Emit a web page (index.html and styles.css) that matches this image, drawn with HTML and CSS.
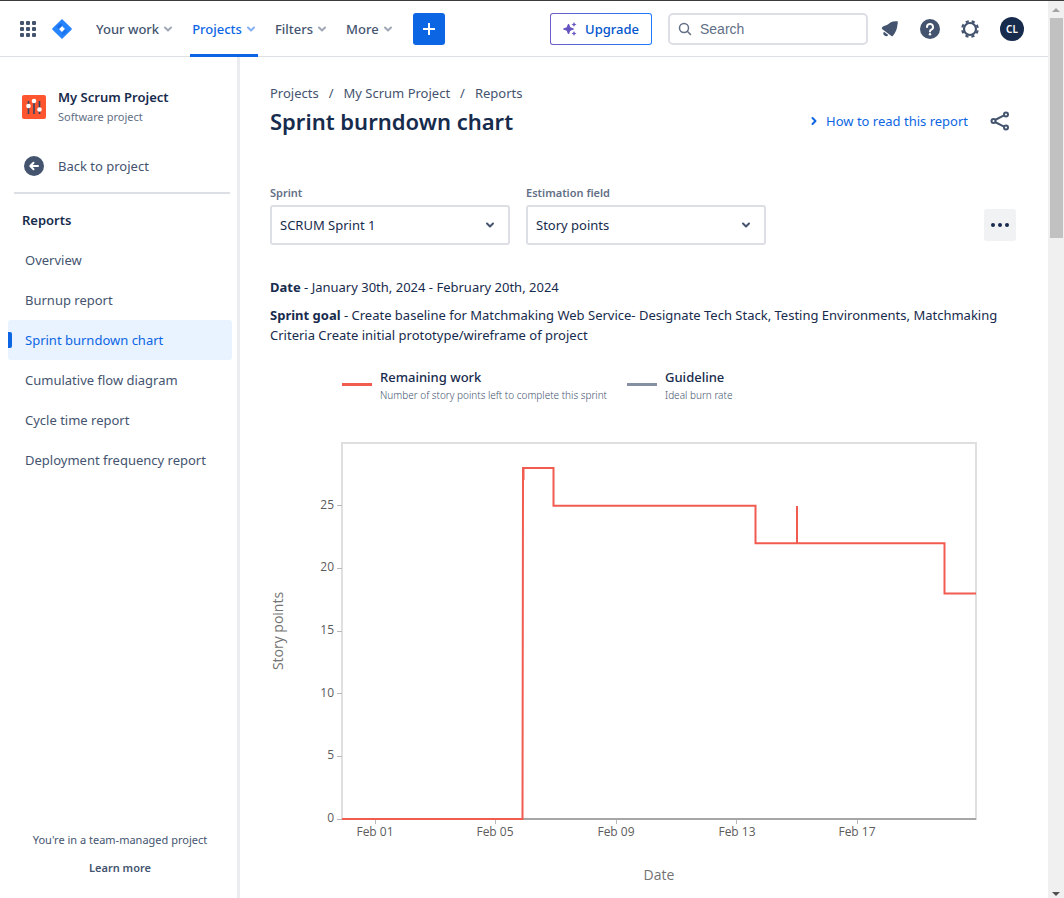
FILE: index.html
```html
<!DOCTYPE html>
<html lang="en">
<head>
<meta charset="utf-8">
<title>Sprint burndown chart</title>
<link rel="stylesheet" href="styles.css">
</head>
<body>
<svg class="defs" width="0" height="0" aria-hidden="true">
  <symbol id="chevron" viewBox="0 0 10 10"><path d="M2 3.5 5 6.5 8 3.5" fill="none" stroke="currentColor" stroke-width="2" stroke-linecap="round" stroke-linejoin="round"/></symbol>
</svg>
<div class="window">
  <div class="app">
    <header class="topbar">
      <button class="icon-btn" aria-label="Switch apps">
        <svg width="16" height="16" viewBox="0 0 16 16" fill="#44546f"><rect width="4" height="4" rx="1"/><rect x="6" width="4" height="4" rx="1"/><rect x="12" width="4" height="4" rx="1"/><rect y="6" width="4" height="4" rx="1"/><rect x="6" y="6" width="4" height="4" rx="1"/><rect x="12" y="6" width="4" height="4" rx="1"/><rect y="12" width="4" height="4" rx="1"/><rect x="6" y="12" width="4" height="4" rx="1"/><rect x="12" y="12" width="4" height="4" rx="1"/></svg>
      </button>
      <a class="logo" href="#" aria-label="Home">
        <svg width="20" height="20" viewBox="0 0 20 20"><path fill="#2684ff" fill-rule="evenodd" d="M10 0 19.5 9.3q.7.7 0 1.4L10 20 .5 10.7q-.7-.7 0-1.4zM10 7 7 10l3 3 3-3z"/><path fill="#0f5fd8" d="M10 0v7L7 10 4.500 7.500Q7 5 10 4z" opacity=".6"/><path fill="#0f5fd8" d="M10 20v-7l3-3 2.500 2.500Q13 15 10 16z" opacity=".45"/></svg>
      </a>
      <nav class="menu">
        <button class="menu-item">Your work <svg class="chev"><use href="#chevron"/></svg></button>
        <button class="menu-item active">Projects <svg class="chev"><use href="#chevron"/></svg></button>
        <button class="menu-item">Filters <svg class="chev"><use href="#chevron"/></svg></button>
        <button class="menu-item">More <svg class="chev"><use href="#chevron"/></svg></button>
      </nav>
      <button class="create" aria-label="Create">
        <svg width="12" height="12" viewBox="0 0 12 12"><path d="M6 0v12M0 6h12" stroke="#fff" stroke-width="2"/></svg>
      </button>
      <div class="tools">
        <button class="upgrade">
          <svg width="14" height="14" viewBox="0 0 14 14" fill="#6554c0"><path d="M5.500 2 6.900 5.600 10.500 7 6.900 8.400 5.500 12 4.100 8.400.5 7 4.100 5.600z" stroke="#6554c0" stroke-linejoin="round"/><path d="M11 0l.8 1.700 1.700.8-1.700.8L11 5l-.8-1.700-1.700-.8 1.700-.8zM11 9l.8 1.700 1.700.8-1.700.8L11 14l-.8-1.700-1.700-.8 1.700-.8z"/></svg>
          Upgrade
        </button>
        <label class="search">
          <svg width="14" height="14" viewBox="0 0 14 14" fill="none" stroke="#626f86" stroke-width="1.500"><circle cx="6" cy="6" r="4.500"/><path d="m9.300 9.300 3.200 3.200" stroke-linecap="round"/></svg>
          <input type="search" placeholder="Search" aria-label="Search">
        </label>
        <button class="icon-btn" aria-label="Notifications">
          <svg width="18" height="18" viewBox="0 0 18 18" fill="#44546f"><path d="M16.700 1.300q-2.200-.4-4.700.2C8.700 2.300 7.800 4 5.900 5 4.300 5.900 1.500 6 .8 8q-.2.800.6 1.300l9 6.800q.8.500 1.400-.1c1.200-1.400 2.400-3.100 3.300-5.400q1.100-2.500 1.400-6 .4-1.600.2-3.300z"/><path d="m3 11.800 4.300 3.300a2.600 2.600 0 0 1-4.300-3.300z"/></svg>
        </button>
        <button class="icon-btn" aria-label="Help">
          <svg width="20" height="20" viewBox="0 0 20 20"><circle cx="10" cy="10" r="10" fill="#44546f"/><path d="M7 8a3 3 0 1 1 4.300 2.700Q10 11.300 10 12.500" fill="none" stroke="#fff" stroke-width="2" stroke-linecap="round"/><circle cx="10" cy="15.300" r="1.200" fill="#fff"/></svg>
        </button>
        <button class="icon-btn" aria-label="Settings">
          <svg width="18" height="18" viewBox="0 0 18 18"><circle cx="9" cy="9" r="6" fill="none" stroke="#44546f" stroke-width="2.200"/><circle cx="9" cy="9" r="7.800" fill="none" stroke="#44546f" stroke-width="2.200" stroke-dasharray="3.200 2.926" stroke-dashoffset="-1.460"/></svg>
        </button>
        <button class="avatar" aria-label="Account">CL</button>
      </div>
    </header>

    <div class="body">
      <aside class="sidebar">
        <div class="project">
          <svg width="24" height="24" viewBox="0 0 24 24"><rect width="24" height="24" rx="2" fill="#ff5630"/><path d="M6.500 6v13M12 6v13M17.500 6v13" stroke="#344563" stroke-width="1.600"/><circle cx="6.500" cy="11" r="2.300" fill="#fff"/><circle cx="12" cy="6" r="2.300" fill="#fff"/><circle cx="17.500" cy="14.500" r="2.300" fill="#fff"/></svg>
          <div><div class="project-name">My Scrum Project</div><div class="project-type">Software project</div></div>
        </div>
        <a class="back" href="#">
          <svg width="20" height="20" viewBox="0 0 20 20"><circle cx="10" cy="10" r="10" fill="#44546f"/><path d="M14 10H6.500M9.500 6.800 6.300 10l3.200 3.200" fill="none" stroke="#fff" stroke-width="2" stroke-linecap="round" stroke-linejoin="round"/></svg>
          Back to project
        </a>
        <h2 class="side-title">Reports</h2>
        <nav class="side-nav">
          <a href="#">Overview</a>
          <a href="#">Burnup report</a>
          <a class="current" href="#" aria-current="page">Sprint burndown chart</a>
          <a href="#">Cumulative flow diagram</a>
          <a href="#">Cycle time report</a>
          <a href="#">Deployment frequency report</a>
        </nav>
        <div class="side-foot"><p>You're in a team-managed project</p><a href="#">Learn more</a></div>
      </aside>

      <main class="content">
        <nav class="crumbs" aria-label="Breadcrumbs"><a href="#">Projects</a><span>/</span><a href="#">My Scrum Project</a><span>/</span><a href="#">Reports</a></nav>
        <div class="title-row">
          <h1>Sprint burndown chart</h1>
          <button class="howto"><svg class="chev right"><use href="#chevron"/></svg>How to read this report</button>
          <button class="icon-btn" aria-label="Share">
            <svg width="20" height="20" viewBox="0 0 20 20" fill="none" stroke="#44546f" stroke-width="2"><path d="m5 9 9-4.700M5 11l9 4.700"/><circle cx="3.500" cy="10" r="2"/><circle cx="16" cy="3.500" r="2"/><circle cx="16" cy="16.500" r="2"/></svg>
          </button>
        </div>
        <div class="filters">
          <div class="field"><label for="sprint">Sprint</label>
            <div class="select"><select id="sprint"><option>SCRUM Sprint 1</option></select><svg class="chev"><use href="#chevron"/></svg></div></div>
          <div class="field"><label for="estimation">Estimation field</label>
            <div class="select"><select id="estimation"><option>Story points</option></select><svg class="chev"><use href="#chevron"/></svg></div></div>
          <button class="more" aria-label="More actions"><svg width="18" height="4" viewBox="0 0 18 4" fill="#172b4d"><circle cx="2" cy="2" r="2"/><circle cx="9" cy="2" r="2"/><circle cx="16" cy="2" r="2"/></svg></button>
        </div>
        <div class="info">
          <p><strong>Date</strong> - January 30th, 2024 - February 20th, 2024</p>
          <p><strong>Sprint goal</strong> - Create baseline for Matchmaking Web Service- Designate Tech Stack, Testing Environments, Matchmaking Criteria Create initial prototype/wireframe of project</p>
        </div>
        <div class="legend">
          <div class="key"><i class="swatch work"></i><div><div class="key-name">Remaining work</div><div class="key-note">Number of story points left to complete this sprint</div></div></div>
          <div class="key"><i class="swatch guide"></i><div><div class="key-name">Guideline</div><div class="key-note">Ideal burn rate</div></div></div>
        </div>
        <svg class="chart" viewBox="0 0 746 460" role="img" aria-label="Burndown of story points by date">
          <rect x="72" y="13" width="634" height="376" fill="none" stroke="#dfdfdf" stroke-width="2"/>
          <path d="M72 389H706" stroke="#a6a6a6" stroke-width="2"/>
          <path d="M67 389.500h5M67 326.500h5M67 263.500h5M67 201.500h5M67 138.500h5M67 75.500h5M105.500 390v4M225.500 390v4M346.500 390v4M466.500 390v4M587.500 390v4" stroke="#b8b8b8"/>
          <g class="tick y"><text x="64" y="392">0</text><text x="64" y="329">5</text><text x="64" y="267">10</text><text x="64" y="204">15</text><text x="64" y="141">20</text><text x="64" y="79">25</text></g>
          <g class="tick x"><text x="105" y="406">Feb 01</text><text x="225" y="406">Feb 05</text><text x="346" y="406">Feb 09</text><text x="467" y="406">Feb 13</text><text x="587" y="406">Feb 17</text></g>
          <text class="axis" x="389" y="450">Date</text>
          <text class="axis" transform="translate(13 201) rotate(-90)">Story points</text>
          <path d="M72 389H252.500L253 50V38H283.500V75.700H485.500V113.300H527V76V113.300H674.500V163.500H706" fill="none" stroke="#f15b50" stroke-width="2"/>
          <path d="M254 38v12" stroke="#f15b50"/>
        </svg>
      </main>
    </div>
  </div>
  <div class="scrollbar" aria-hidden="true">
    <svg width="16" height="17" viewBox="0 0 16 17"><path d="M4 11h8L8 7z" fill="#a3a3a3"/></svg>
    <div class="thumb"></div>
    <svg width="16" height="17" viewBox="0 0 16 17"><path d="M4 11h8l-4 4z" fill="#505050"/></svg>
  </div>
</div>
</body>
</html>
```
FILE: styles.css
```css
* { box-sizing: border-box; }
body { margin: 0; font: 13px/20px "Noto Sans", "Open Sans", sans-serif; color: #172b4d; background: #fff; }
h1, h2, p { margin: 0; }
a { color: inherit; text-decoration: none; }
button { font: inherit; color: inherit; background: none; border: 0; padding: 0; cursor: pointer; }
svg { display: block; flex: none; }
.defs { position: absolute; }
.window { display: flex; height: 100vh; border-top: 1px solid #3b3b3b; overflow: hidden; }
.app { flex: 1; min-width: 0; display: flex; flex-direction: column; }
.chev { width: 10px; height: 10px; }
.icon-btn { display: flex; }

.topbar { display: flex; align-items: center; height: 56px; flex: none; padding: 0 24px 0 20px; border-bottom: 1px solid #dcdfe4; color: #44546f; }
.logo { margin: 0 22px 0 16px; }
.menu { display: flex; align-self: stretch; gap: 15px; }
.menu-item { display: flex; align-items: center; gap: 4px; font-weight: 500; padding: 2px 2px 0; margin-bottom: -1px; border-bottom: 3px solid transparent; }
.menu-item .chev { opacity: .5; }
.menu-item.active { color: #0c66e4; border-color: #0c66e4; }
.create { display: grid; place-items: center; width: 32px; height: 32px; margin-left: 18px; border-radius: 3px; background: #0c66e4; }
.tools { display: flex; align-items: center; margin-left: auto; gap: 21px; }
.upgrade { display: flex; align-items: center; gap: 8px; height: 32px; padding: 0 12px; color: #0055cc; font-weight: 500; border: 1px solid transparent; border-radius: 3px; background: linear-gradient(#fff, #fff) padding-box, linear-gradient(90deg, #6e5dc6, #1d7afc) border-box; }
.search { display: flex; align-items: center; gap: 8px; width: 200px; height: 32px; margin-left: -5px; margin-right: -8px; padding: 0 8px; border: 2px solid #dcdfe4; border-radius: 5px; }
.search input { flex: 1; min-width: 0; border: 0; padding: 0; outline: 0; background: none; font: 14px/20px "Liberation Sans", sans-serif; }
.search input::placeholder { color: #626f86; opacity: 1; }
.avatar { width: 24px; height: 24px; border-radius: 50%; background: #172b4d; color: #fff; font-size: 10px; font-weight: 600; }

.body { flex: 1; min-height: 0; display: flex; }
.sidebar { width: 240px; flex: none; display: flex; flex-direction: column; border-right: 3px solid #ebecf0; padding: 30px 5px 20px 8px; }
.project { display: flex; align-items: center; gap: 12px; padding-left: 14px; height: 40px; }
.project-name { font-weight: 600; }
.project-type { font-size: 11px; color: #626f86; }
.back { display: flex; align-items: center; gap: 14px; margin: 20px 2px 0 6px; padding: 0 0 8px 10px; height: 47px; border-bottom: 2px solid #dcdfe4; color: #44546f; }
.side-title { margin: 16px 14px 10px; font-size: 13px; line-height: 20px; font-weight: 600; }
.side-nav { display: flex; flex-direction: column; }
.side-nav a { height: 40px; line-height: 40px; padding-left: 17px; border-radius: 3px; color: #44546f; white-space: nowrap; }
.side-nav .current { display: flex; align-items: center; padding-left: 0; gap: 13px; background: #e9f2ff; color: #0c66e4; }
.current::before { content: ""; width: 4px; height: 16px; border-radius: 0 2px 2px 0; background: #0c66e4; }
.side-foot { margin-top: auto; display: flex; flex-direction: column; gap: 8px; align-items: center; font-size: 11px; color: #44546f; }
.side-foot a { font-weight: 600; }

.content { flex: 1; min-width: 0; padding: 26px 32px 0 30px; overflow: hidden; }
.crumbs { display: flex; gap: 10px; color: #44546f; }
.title-row { display: flex; align-items: center; height: 36px; }
h1 { flex: 1; font-size: 22px; line-height: 28px; font-weight: 600; }
.howto { display: flex; align-items: center; gap: 7px; margin-right: 22px; color: #0c66e4; }
.right { transform: rotate(-90deg); }
.title-row .icon-btn { margin-right: 6px; }
.filters { display: flex; align-items: flex-end; gap: 16px; margin-top: 46px; }
.field { width: 240px; }
.field label { display: block; font-size: 11px; line-height: 16px; margin-bottom: 4px; font-weight: 600; color: #626f86; }
.select { display: grid; align-items: center; }
.select > * { grid-area: 1 / 1; }
.select select { appearance: none; width: 100%; height: 40px; padding: 0 8px; border: 2px solid #dcdfe4; border-radius: 3px; background: #fff; color: #172b4d; font: inherit; }
.select .chev { justify-self: end; margin-right: 15px; color: #44546f; pointer-events: none; }
.more { display: grid; place-items: center; width: 32px; height: 32px; margin: 0 0 4px auto; border-radius: 3px; background: #f1f2f4; }
.info { margin-top: 32px; display: flex; flex-direction: column; gap: 8px; }
.info strong { font-weight: 700; }
.legend { display: flex; gap: 20px; margin: 22px 0 0 72px; }
.key { display: flex; gap: 8px; }
.swatch { width: 30px; height: 3px; margin-top: 16px; }
.work { background: #f15b50; }
.guide { background: #8590a2; }
.key-name { font-weight: 500; }
.key-note { font-size: 10px; line-height: 16px; color: #44546f; font-weight: 300; }
.chart { width: 100%; height: auto; margin-top: 27px; overflow: visible; font-family: "Open Sans", "Noto Sans", sans-serif; }
.tick { font-size: 12px; fill: #5c5c5c; }
.y { text-anchor: end; }
.x { text-anchor: middle; }
.axis { font-size: 14px; fill: #737373; text-anchor: middle; }

.scrollbar { width: 16px; flex: none; display: flex; flex-direction: column; background: #f0f0f0; }
.thumb { height: 220px; margin: 0 1px auto 2px; background: #c1c1c1; }
```
